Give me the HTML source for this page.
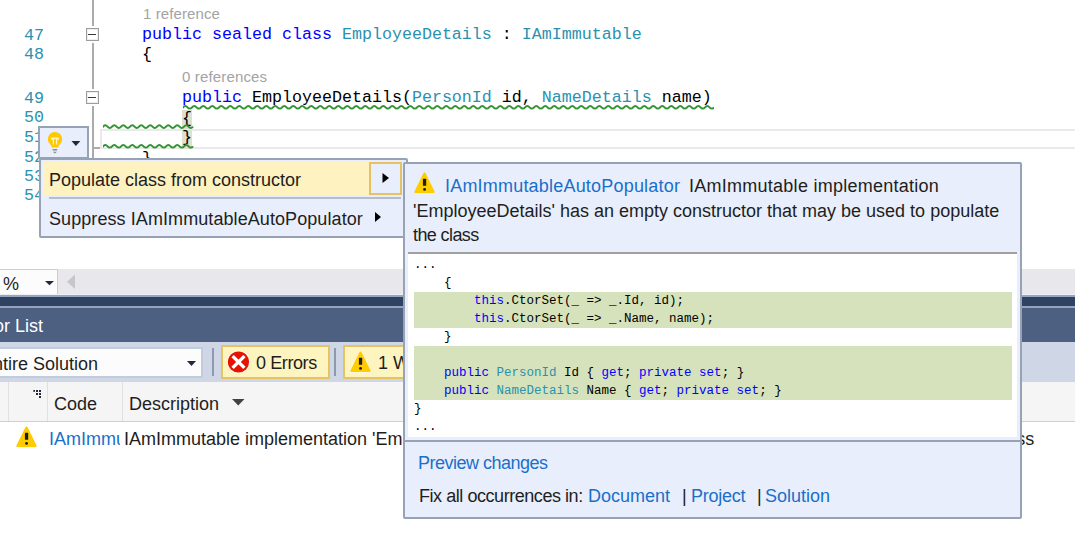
<!DOCTYPE html>
<html><head><meta charset="utf-8">
<style>
html,body{margin:0;padding:0;}
body{width:1075px;height:549px;overflow:hidden;position:relative;background:#fff;font-family:"Liberation Sans",sans-serif;}
.a{position:absolute;white-space:pre;}
.m{font-family:"Liberation Mono",monospace;font-size:16.667px;line-height:20px;height:20px;}
.ln{color:#2B91AF;width:44px;left:0;text-align:right;}
.kw{color:#0000FF;}
.ty{color:#2B91AF;}
.cl{font-size:15px;line-height:20px;color:#A3A3A3;}
.ui{font-size:18px;line-height:26px;color:#1E1E1E;}
.lnk{color:#1A6FCB;}
.pm{font-family:"Liberation Mono",monospace;font-size:12.5px;line-height:18px;height:18px;color:#000;}
.box{position:absolute;box-sizing:border-box;}
</style></head><body>

<!-- ============ EDITOR ============ -->
<!-- outline vertical line -->
<div class="box" style="left:92px;top:0;width:2px;height:26px;background:#ABABAB"></div>
<div class="box" style="left:92px;top:43px;width:2px;height:46px;background:#ABABAB"></div>
<div class="box" style="left:92px;top:106px;width:2px;height:60px;background:#ABABAB"></div>
<div class="box" style="left:92px;top:147px;width:8px;height:2px;background:#ABABAB"></div>
<!-- collapse boxes -->
<div class="box" style="left:86px;top:28px;width:13px;height:13px;border:1px solid #9C9C9C;background:#fff;box-shadow:inset 0 0 0 1px #EEEEEE"><div class="box" style="left:1px;top:4.5px;width:7.5px;height:1.6px;background:#3A3A3A"></div></div>
<div class="box" style="left:86px;top:91px;width:13px;height:13px;border:1px solid #9C9C9C;background:#fff;box-shadow:inset 0 0 0 1px #EEEEEE"><div class="box" style="left:1px;top:4.5px;width:7.5px;height:1.6px;background:#3A3A3A"></div></div>

<!-- line numbers -->
<div class="a m ln" style="top:26px">47</div>
<div class="a m ln" style="top:45px">48</div>
<div class="a m ln" style="top:89px">49</div>
<div class="a m ln" style="top:108px">50</div>
<div class="a m ln" style="top:128px">51</div>
<div class="a m ln" style="top:148px">52</div>
<div class="a m ln" style="top:167px">53</div>
<div class="a m ln" style="top:186px">54</div>

<!-- current line box -->
<div class="box" style="left:100px;top:129px;width:980px;height:20px;border:2px solid #EAEAEA;"></div>
<!-- brace highlight -->
<div class="box" style="left:182px;top:110px;width:10px;height:19px;background:#DEE0D0"></div>
<div class="box" style="left:182px;top:130px;width:10px;height:19px;background:#DEE0D0"></div>

<!-- codelens -->
<div class="a cl" style="left:143px;top:4px;letter-spacing:0.1px">1 reference</div>
<div class="a cl" style="left:182px;top:67px;letter-spacing:0.15px">0 references</div>

<!-- code -->
<div class="a m" style="left:142px;top:25px"><span class="kw">public sealed class</span> <span class="ty">EmployeeDetails</span> : <span class="ty">IAmImmutable</span></div>
<div class="a m" style="left:142px;top:45px">{</div>
<div class="a m" style="left:142px;top:88px">    <span class="kw">public</span> EmployeeDetails(<span class="ty">PersonId</span> id, <span class="ty">NameDetails</span> name)</div>
<div class="a m" style="left:142px;top:109px">    {</div>
<div class="a m" style="left:142px;top:128px">    }</div>
<div class="a m" style="left:142px;top:149px">}</div>

<!-- squiggles -->
<svg class="a" style="left:0;top:0" width="1075" height="270">
 <defs><clipPath id="c1"><rect x="183" y="100" width="531" height="14"/></clipPath><clipPath id="c2"><rect x="103" y="118" width="91" height="34"/></clipPath></defs>
 <g fill="none" stroke="#339433" stroke-width="2">
 <path clip-path="url(#c1)" d="M178.55,107.30 Q180.80,109.90 183.05,107.30 T187.55,107.30 T192.05,107.30 T196.55,107.30 T201.05,107.30 T205.55,107.30 T210.05,107.30 T214.55,107.30 T219.05,107.30 T223.55,107.30 T228.05,107.30 T232.55,107.30 T237.05,107.30 T241.55,107.30 T246.05,107.30 T250.55,107.30 T255.05,107.30 T259.55,107.30 T264.05,107.30 T268.55,107.30 T273.05,107.30 T277.55,107.30 T282.05,107.30 T286.55,107.30 T291.05,107.30 T295.55,107.30 T300.05,107.30 T304.55,107.30 T309.05,107.30 T313.55,107.30 T318.05,107.30 T322.55,107.30 T327.05,107.30 T331.55,107.30 T336.05,107.30 T340.55,107.30 T345.05,107.30 T349.55,107.30 T354.05,107.30 T358.55,107.30 T363.05,107.30 T367.55,107.30 T372.05,107.30 T376.55,107.30 T381.05,107.30 T385.55,107.30 T390.05,107.30 T394.55,107.30 T399.05,107.30 T403.55,107.30 T408.05,107.30 T412.55,107.30 T417.05,107.30 T421.55,107.30 T426.05,107.30 T430.55,107.30 T435.05,107.30 T439.55,107.30 T444.05,107.30 T448.55,107.30 T453.05,107.30 T457.55,107.30 T462.05,107.30 T466.55,107.30 T471.05,107.30 T475.55,107.30 T480.05,107.30 T484.55,107.30 T489.05,107.30 T493.55,107.30 T498.05,107.30 T502.55,107.30 T507.05,107.30 T511.55,107.30 T516.05,107.30 T520.55,107.30 T525.05,107.30 T529.55,107.30 T534.05,107.30 T538.55,107.30 T543.05,107.30 T547.55,107.30 T552.05,107.30 T556.55,107.30 T561.05,107.30 T565.55,107.30 T570.05,107.30 T574.55,107.30 T579.05,107.30 T583.55,107.30 T588.05,107.30 T592.55,107.30 T597.05,107.30 T601.55,107.30 T606.05,107.30 T610.55,107.30 T615.05,107.30 T619.55,107.30 T624.05,107.30 T628.55,107.30 T633.05,107.30 T637.55,107.30 T642.05,107.30 T646.55,107.30 T651.05,107.30 T655.55,107.30 T660.05,107.30 T664.55,107.30 T669.05,107.30 T673.55,107.30 T678.05,107.30 T682.55,107.30 T687.05,107.30 T691.55,107.30 T696.05,107.30 T700.55,107.30 T705.05,107.30 T709.55,107.30 T714.05,107.30"/>
 <path clip-path="url(#c2)" d="M98.55,126.60 Q100.80,129.20 103.05,126.60 T107.55,126.60 T112.05,126.60 T116.55,126.60 T121.05,126.60 T125.55,126.60 T130.05,126.60 T134.55,126.60 T139.05,126.60 T143.55,126.60 T148.05,126.60 T152.55,126.60 T157.05,126.60 T161.55,126.60 T166.05,126.60 T170.55,126.60 T175.05,126.60 T179.55,126.60 T184.05,126.60 T188.55,126.60 T193.05,126.60"/>
 <path clip-path="url(#c2)" d="M98.55,146.30 Q100.80,148.90 103.05,146.30 T107.55,146.30 T112.05,146.30 T116.55,146.30 T121.05,146.30 T125.55,146.30 T130.05,146.30 T134.55,146.30 T139.05,146.30 T143.55,146.30 T148.05,146.30 T152.55,146.30 T157.05,146.30 T161.55,146.30 T166.05,146.30 T170.55,146.30 T175.05,146.30 T179.55,146.30 T184.05,146.30 T188.55,146.30 T193.05,146.30"/>
 </g>
</svg>

<!-- ============ BOTTOM PANEL ============ -->
<div class="box" style="left:0;top:269px;width:1075px;height:25px;background:#E8E8EC"></div>
<div class="box" style="left:0;top:269px;width:58px;height:25px;background:#FCFCFC;border:1px solid #C6CEDD;border-left:none;border-bottom:none"></div>
<div class="a ui" style="left:3px;top:271px;color:#1E1E1E">%</div>
<svg class="a" style="left:45px;top:281px" width="10" height="6"><polygon points="0,0 9,0 4.5,4.3" fill="#1E2A3C"/></svg>
<svg class="a" style="left:66px;top:274px" width="10" height="16"><polygon points="9,0.5 9,15 1,7.8" fill="#C6C6CC"/></svg>

<div class="box" style="left:0;top:294px;width:1075px;height:1px;background:#EEEFF4"></div>
<div class="box" style="left:0;top:295px;width:1075px;height:2px;background:#97A5BF"></div>
<div class="box" style="left:0;top:297px;width:1075px;height:9px;background:#2F4262"></div>
<div class="box" style="left:0;top:306px;width:1075px;height:2px;background:#95A3BD"></div>
<div class="box" style="left:0;top:308px;width:1075px;height:34px;background:#4D6082"></div>
<div class="a ui" style="left:-30px;top:313px;color:#FFFFFF">Error List</div>

<div class="box" style="left:0;top:342px;width:1075px;height:40px;background:#CFD6E5"></div>
<div class="box" style="left:0;top:347px;width:203px;height:31px;background:#FCFCFC;border:2px solid #C3CCDC;border-left:none"></div>
<div class="a ui" style="left:-19px;top:351px">Entire Solution</div>
<svg class="a" style="left:187px;top:360.5px" width="11" height="7"><polygon points="0,0 9,0 4.5,5" fill="#1E2A3C"/></svg>
<div class="box" style="left:212px;top:348px;width:2px;height:28px;background:#8E99AD"></div>
<div class="box" style="left:221px;top:345px;width:109px;height:34px;background:#FDF4BF;border:2px solid #E5C365"></div>
<svg class="a" style="left:226px;top:350px" width="25" height="25"><circle cx="12.5" cy="12" r="11.6" fill="#FFF8E8"/><circle cx="12.5" cy="12" r="10.6" fill="#E51400"/><path d="M6.6,6.1 L18.4,17.9 M18.4,6.1 L6.6,17.9" stroke="#fff" stroke-width="3.4"/></svg>
<div class="a ui" style="left:256px;top:350px;letter-spacing:-0.4px">0 Errors</div>
<div class="box" style="left:334px;top:348px;width:2px;height:28px;background:#8E99AD"></div>
<div class="box" style="left:343px;top:345px;width:110px;height:34px;background:#FDF4BF;border:2px solid #E5C365"></div>
<svg class="a" style="left:349.5px;top:351px" width="22" height="22"><path d="M10.5,1.6 L19.6,19.9 L1.4,19.9 Z" fill="#FFF8E0" stroke="#FFF8E0" stroke-width="4" stroke-linejoin="round"/><path d="M10.5,1.6 L19.6,19.9 L1.4,19.9 Z" fill="#FFCC00" stroke="#FFCC00" stroke-width="2.2" stroke-linejoin="round"/><rect x="8.9" y="6.8" width="3.3" height="7" rx="0.6" fill="#1E1E1E"/><circle cx="10.55" cy="17.4" r="1.45" fill="#1E1E1E"/></svg>
<div class="a ui" style="left:378px;top:350px">1 Warning</div>

<div class="box" style="left:0;top:382px;width:1075px;height:39px;background:#F5F5F5"></div>
<div class="box" style="left:0;top:421px;width:1075px;height:1px;background:#CCCEDB"></div>
<div class="box" style="left:8px;top:382px;width:1px;height:39px;background:#E0E0E0"></div>
<div class="box" style="left:47px;top:382px;width:1px;height:39px;background:#E0E0E0"></div>
<div class="box" style="left:122px;top:382px;width:1px;height:39px;background:#E0E0E0"></div>
<div class="a ui" style="left:54px;top:391px">Code</div>
<div class="a ui" style="left:129px;top:391px">Description</div>
<svg class="a" style="left:232px;top:399px" width="14" height="8"><polygon points="0,0 12.5,0 6.25,6.5" fill="#424242"/></svg>

<svg class="a" style="left:16px;top:425.5px" width="22" height="22"><path d="M10.5,1.6 L19.6,19.9 L1.4,19.9 Z" fill="#FFCC00" stroke="#FFCC00" stroke-width="2.2" stroke-linejoin="round"/><rect x="8.9" y="6.8" width="3.3" height="7" rx="0.6" fill="#1E1E1E"/><circle cx="10.55" cy="17.4" r="1.45" fill="#1E1E1E"/></svg>
<svg class="a" style="left:33px;top:390px" width="9" height="9"><rect x="0.3" y="0" width="1.7" height="1.8" fill="#1E2A3C"/><rect x="3" y="0" width="2" height="2" fill="#1E2A3C"/><rect x="6" y="0" width="2" height="2" fill="#1E2A3C"/><rect x="3" y="3" width="2" height="2" fill="#1E2A3C"/><rect x="6" y="3" width="2" height="2" fill="#1E2A3C"/><rect x="6" y="6" width="2" height="2" fill="#1E2A3C"/></svg>
<div class="box" style="left:49px;top:426px;width:71px;height:24px;overflow:hidden"><div class="a ui lnk" style="left:0;top:0">IAmImmutableAutoPopulator</div></div>
<div class="a ui" style="left:124px;top:426px">IAmImmutable implementation 'EmployeeDetails' has an empty constructor that may be used to populate the class</div>

<!-- ============ LIGHTBULB ============ -->
<div class="box" style="left:38px;top:126px;width:51px;height:33px;background:#E8EEFB;border:2px solid #97A3B5"></div>
<svg class="a" style="left:42px;top:128px" width="44" height="30">
 <path d="M9.8,19.4 C9.8,16.6 5.8,15 5.8,11.2 A7.2,7.2 0 1 1 20.2,11.2 C20.2,15 16.4,16.6 16.4,19.4 Z" fill="#FFC800"/>
 <path d="M10,10.6 L16,10.6" stroke="#FFF4C8" stroke-width="2.2" fill="none" stroke-linecap="round"/><path d="M11.4,11 L11.4,16.4 M14.6,11 L14.6,16.4" stroke="#FFF4C8" stroke-width="1.3" fill="none"/><rect x="12.2" y="11" width="1.6" height="1" fill="#FFC800"/>
 <rect x="10.6" y="21" width="4.6" height="1.5" fill="#8C8C8C"/>
 <path d="M10.8,23.8 L15,23.8 L12.9,25.6 Z" fill="#8C8C8C"/>
 <polygon points="29.5,13.1 38.3,13.1 33.9,17.9" fill="#1E2A3C"/>
</svg>

<!-- ============ MENU ============ -->
<div class="box" style="left:39px;top:158px;width:369px;height:80px;background:#E8EEFB;border:2px solid #97A3B5;border-radius:2px"></div>
<div class="box" style="left:43px;top:162px;width:327px;height:33px;background:#FDF2C0"></div>
<div class="box" style="left:369px;top:162px;width:33px;height:33px;border:2px solid #E5C365"></div>
<svg class="a" style="left:382px;top:173px" width="8" height="11"><polygon points="0.5,0 7,5 0.5,10" fill="#000"/></svg>
<div class="a ui" style="left:49px;top:167px">Populate class from constructor</div>
<div class="box" style="left:49px;top:197px;width:352px;height:2px;background:#B7BDC8"></div>
<div class="a ui" style="left:49px;top:206px;letter-spacing:0.08px">Suppress IAmImmutableAutoPopulator</div>
<svg class="a" style="left:375px;top:212px" width="8" height="11"><polygon points="0,0 6,5 0,10" fill="#000"/></svg>

<!-- ============ PREVIEW ============ -->
<div class="box" style="left:403px;top:162px;width:619px;height:357px;background:#E8EEFB;border:2px solid #97A3B5;border-radius:2px"></div>
<svg class="a" style="left:414px;top:171.5px" width="22" height="22"><path d="M10.5,1.6 L19.6,19.9 L1.4,19.9 Z" fill="#FFCC00" stroke="#FFCC00" stroke-width="2.2" stroke-linejoin="round"/><rect x="8.9" y="6.8" width="3.3" height="7" rx="0.6" fill="#1E1E1E"/><circle cx="10.55" cy="17.4" r="1.45" fill="#1E1E1E"/></svg>
<div class="a ui lnk" style="left:445px;top:173px;letter-spacing:0.2px">IAmImmutableAutoPopulator</div>
<div class="a ui" style="left:689px;top:173px;letter-spacing:0.26px">IAmImmutable implementation</div>
<div class="a ui" style="left:413px;top:198px">'EmployeeDetails' has an empty constructor that may be used to populate</div>
<div class="a ui" style="left:413px;top:222px;letter-spacing:-0.6px">the class</div>
<div class="box" style="left:408px;top:252px;width:609px;height:185px;background:#fff;border-top:2px solid #A0A0A0"></div>
<div class="box" style="left:405px;top:440px;width:615px;height:2px;background:#97A3B5"></div>
<div class="box" style="left:414px;top:292px;width:598px;height:36px;background:#D6E2BB"></div>
<div class="box" style="left:414px;top:346px;width:598px;height:54px;background:#D6E2BB"></div>
<div class="a pm" style="left:414px;top:256px">...</div>
<div class="a pm" style="left:414px;top:274px">    {</div>
<div class="a pm" style="left:414px;top:292px">        <span class="kw">this</span>.CtorSet(_ =&gt; _.Id, id);</div>
<div class="a pm" style="left:414px;top:310px">        <span class="kw">this</span>.CtorSet(_ =&gt; _.Name, name);</div>
<div class="a pm" style="left:414px;top:328px">    }</div>
<div class="a pm" style="left:414px;top:364px">    <span class="kw">public</span> <span class="ty">PersonId</span> Id { <span class="kw">get</span>; <span class="kw">private set</span>; }</div>
<div class="a pm" style="left:414px;top:382px">    <span class="kw">public</span> <span class="ty">NameDetails</span> Name { <span class="kw">get</span>; <span class="kw">private set</span>; }</div>
<div class="a pm" style="left:414px;top:400px">}</div>
<div class="a pm" style="left:414px;top:418px">...</div>
<div class="a ui lnk" style="left:418px;top:450px;letter-spacing:-0.5px">Preview changes</div>
<div class="a ui" style="left:419px;top:483px;letter-spacing:-0.45px">Fix all occurrences in:</div>
<div class="a ui lnk" style="left:588px;top:483px">Document</div>
<div class="a ui" style="left:682px;top:483px">|</div>
<div class="a ui lnk" style="left:691px;top:483px;letter-spacing:-0.25px">Project</div>
<div class="a ui" style="left:757px;top:483px">|</div>
<div class="a ui lnk" style="left:765px;top:483px">Solution</div>

</body></html>
